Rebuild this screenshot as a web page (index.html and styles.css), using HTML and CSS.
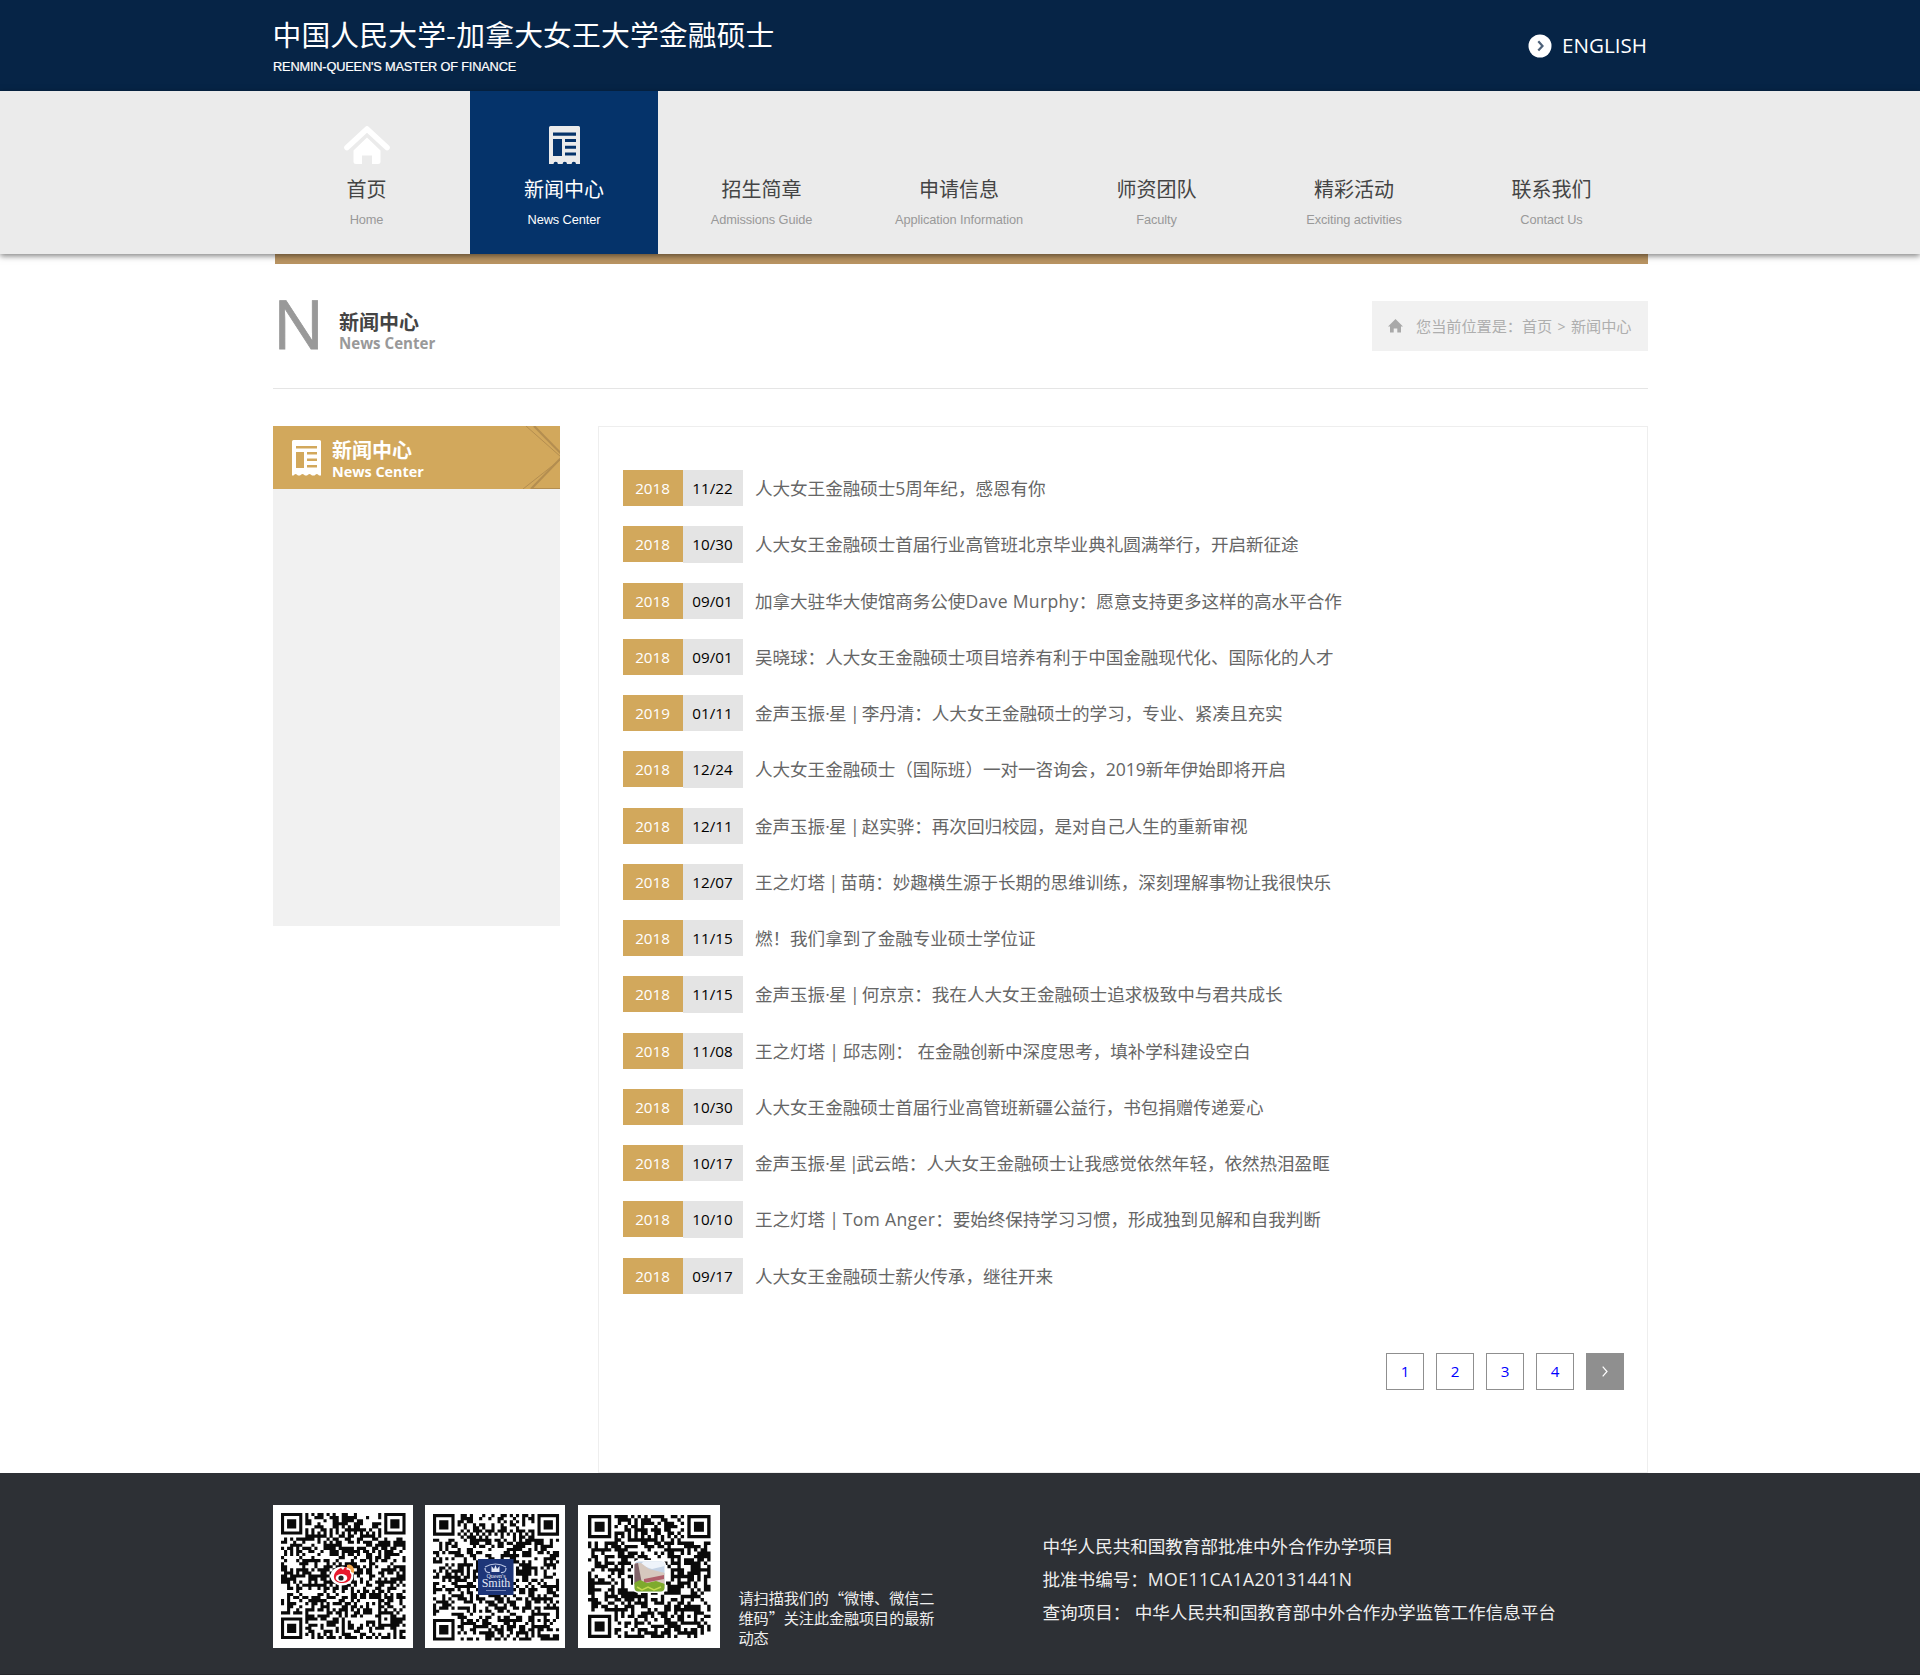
FILE: index.html
```html
<!DOCTYPE html>
<html lang="zh-CN">
<head>
<meta charset="utf-8">
<title>新闻中心</title>
<link rel="stylesheet" href="styles.css">
</head>
<body>
<header class="top">
  <div class="wrap top-inner">
    <div class="brand">
      <h1 class="brand-cn">中国人民大学-加拿大女王大学金融硕士</h1>
      <p class="brand-en">RENMIN-QUEEN'S MASTER OF FINANCE</p>
    </div>
    <a class="lang">
      <svg width="24" height="24" viewBox="0 0 24 24"><circle cx="12" cy="12" r="11.5" fill="#fff"/><path d="M10.3 7.3l4.2 4.6-4.2 4.6" fill="none" stroke="#4c6078" stroke-width="2.2"/></svg>
      <span>ENGLISH</span>
    </a>
  </div>
</header>
<nav class="nav">
  <ul class="nav-list">
    <li class="nav-item">
      <svg class="nav-icon" width="46" height="38" viewBox="0 0 46 38"><path d="M3 21.5L23 3l20 18.500" fill="none" stroke="#fff" stroke-width="5.600" stroke-linecap="round" stroke-linejoin="round"/><path d="M23 11.500L36.500 24.500V35.500q0 2.500-2.500 2.500H28V29.500H18V38H12q-2.500 0-2.500-2.500V24.500z" fill="#fff"/></svg>
      <span class="nav-cn">首页</span><span class="nav-en">Home</span></li>
    <li class="nav-item active">
      <svg class="nav-icon" width="31" height="38" viewBox="0 0 31 38"><path fill="#ebebeb" fill-rule="evenodd" d="M1.500 0H29.500Q31 0 31 1.500V38H27a2.200 2.200 0 0 0-4.400 0h-4.600a2.200 2.200 0 0 0-4.400 0H8.900a2.200 2.200 0 0 0-4.400 0H0V1.500Q0 0 1.500 0zM4 6.500v3.200h23V6.500zM4 13v17h9V13zM16 13v3h11v-3zM16 19.700v3h11v-3zM16 26.500v3h11v-3z"/></svg>
      <span class="nav-cn">新闻中心</span><span class="nav-en">News Center</span></li>
    <li class="nav-item"><span class="nav-cn">招生简章</span><span class="nav-en">Admissions Guide</span></li>
    <li class="nav-item"><span class="nav-cn">申请信息</span><span class="nav-en">Application Information</span></li>
    <li class="nav-item"><span class="nav-cn">师资团队</span><span class="nav-en">Faculty</span></li>
    <li class="nav-item"><span class="nav-cn">精彩活动</span><span class="nav-en">Exciting activities</span></li>
    <li class="nav-item"><span class="nav-cn">联系我们</span><span class="nav-en">Contact Us</span></li>
  </ul>
</nav>
<main class="wrap">
  <div class="gold-bar"></div>
  <div class="page-head">
    <span class="initial">N</span>
    <div class="page-title"><h2>新闻中心</h2><p>News Center</p></div>
    <div class="crumb">
      <svg width="15" height="14" viewBox="0 0 15 14"><path d="M7.500 0L15 7.500H13V13.500H9.300V9.500H5.700V13.500H2V7.500H0z" fill="#a9a9a9"/></svg>
      <span>您当前位置是：首页 <i>&gt;</i> 新闻中心</span>
    </div>
  </div>
  <div class="columns">
    <aside class="side">
      <div class="side-head">
        <svg class="side-icon" width="29" height="36" viewBox="0 0 29 36"><path fill="#fff" fill-rule="evenodd" d="M1.500 0H27.500Q29 0 29 1.500V35.500H27q-2-3-4.500 0H20q-2.500-3-5 0H13q-2.500-3-5 0H6q-2.500-3-4.500 0H0V1.500Q0 0 1.500 0zM4 6v2.500h21V6zM4 12v16h8V12zM15 12v2.500h10V12zM15 18.500V21h10v-2.500zM15 25v2.500h10V25z"/></svg>
        <div class="side-title"><h3>新闻中心</h3><p>News Center</p></div>
        <svg class="side-deco" width="40" height="63" viewBox="0 0 40 63"><g fill="none" stroke="#b48e50"><path d="M14 0L41 27.500" stroke-width="2.200"/><path d="M6 0L41 31" stroke-width="1"/><path d="M41 32L11 63" stroke-width="2.200"/><path d="M41 33L3 63" stroke-width="1"/><path d="M11 62.500H40" stroke-width="1"/></g></svg>
      </div>
    </aside>
    <section class="content">
      <ul class="news">
        <li><b>2018</b><time>11/22</time><a>人大女王金融硕士<em>5</em>周年纪，感恩有你</a></li>
        <li><b>2018</b><time>10/30</time><a>人大女王金融硕士首届行业高管班北京毕业典礼圆满举行，开启新征途</a></li>
        <li><b>2018</b><time>09/01</time><a>加拿大驻华大使馆商务公使<em class="name">Dave Murphy</em>：愿意支持更多这样的高水平合作</a></li>
        <li><b>2018</b><time>09/01</time><a>吴晓球：人大女王金融硕士项目培养有利于中国金融现代化、国际化的人才</a></li>
        <li><b>2019</b><time>01/11</time><a>金声玉振<em class="dot">·</em>星<em class="bar"> | </em>李丹清：人大女王金融硕士的学习，专业、紧凑且充实</a></li>
        <li><b>2018</b><time>12/24</time><a>人大女王金融硕士（国际班）一对一咨询会，<em>2019</em>新年伊始即将开启</a></li>
        <li><b>2018</b><time>12/11</time><a>金声玉振<em class="dot">·</em>星<em class="bar"> | </em>赵实骅：再次回归校园，是对自己人生的重新审视</a></li>
        <li><b>2018</b><time>12/07</time><a>王之灯塔<em class="bar"> | </em>苗萌：妙趣横生源于长期的思维训练，深刻理解事物让我很快乐</a></li>
        <li><b>2018</b><time>11/15</time><a>燃！我们拿到了金融专业硕士学位证</a></li>
        <li><b>2018</b><time>11/15</time><a>金声玉振<em class="dot">·</em>星<em class="bar"> | </em>何京京：我在人大女王金融硕士追求极致中与君共成长</a></li>
        <li><b>2018</b><time>11/08</time><a>王之灯塔<em class="bar wide"> | </em>邱志刚：<em> </em>在金融创新中深度思考，填补学科建设空白</a></li>
        <li><b>2018</b><time>10/30</time><a>人大女王金融硕士首届行业高管班新疆公益行，书包捐赠传递爱心</a></li>
        <li><b>2018</b><time>10/17</time><a>金声玉振<em class="dot">·</em>星<em class="bar tight"> |</em>武云皓：人大女王金融硕士让我感觉依然年轻，依然热泪盈眶</a></li>
        <li><b>2018</b><time>10/10</time><a>王之灯塔<em class="bar wide"> | </em><em class="name">Tom Anger</em>：要始终保持学习习惯，形成独到见解和自我判断</a></li>
        <li><b>2018</b><time>09/17</time><a>人大女王金融硕士薪火传承，继往开来</a></li>
      </ul>
      <div class="pager">
        <a>1</a><a>2</a><a>3</a><a>4</a>
        <a class="next"><svg width="6" height="11" viewBox="0 0 6 11"><path d="M.7.7l4.300 4.800-4.300 4.800" fill="none" stroke="#fff" stroke-width="1.200"/></svg></a>
      </div>
    </section>
  </div>
</main>
<footer class="footer">
  <div class="wrap foot-inner">
    <div class="codes">
      <svg width="140" height="143" viewBox="0 0 140 143">
        <rect width="140" height="143" fill="#fff"/>
        <path class="qr" data-n="41" data-x="8" data-y="8" data-w="124.500" data-h="126" data-seed="17" data-gap="3"/>
        <ellipse cx="69" cy="71" rx="11.500" ry="9.500" fill="#fff"/>
        <path d="M61 73c-1-5 4-9 7-10l2 2 2-3c2 0 2 2 1.500 3 3-1 4 1 3.500 3 2 1 1.500 4 .5 6-2 5-15 6-16.500-1z" fill="#e8192c"/>
        <ellipse cx="68.500" cy="73" rx="5.800" ry="4" fill="#fff"/><circle cx="68" cy="73" r="2.600" fill="#222"/>
        <path d="M74 60c4-2 8 2 7 8l-3-1c0-3-1-4-4-4z" fill="#f5a54a"/>
      </svg>
      <svg width="140" height="143" viewBox="0 0 140 143">
        <rect width="140" height="143" fill="#fff"/>
        <path class="qr" data-n="41" data-x="8" data-y="9" data-w="126" data-h="126.500" data-seed="91" data-gap="6"/>
        <rect x="53" y="54" width="35.500" height="36" fill="#1d3578"/>
        <path d="M60 62q10.500-6 21 0M60 63q0 5 5 4.500M81 63q0 5-5 4.500" fill="none" stroke="#b9c4e2" stroke-width="1.200"/>
        <path d="M66.500 67v-6l2.500 3 1.500-4 1.500 4 2.500-3v6z" fill="#e4e9f6"/>
        <text class="logo-small" x="71" y="73">Queen's</text><text class="logo-big" x="71" y="81.500">Smith</text>
        <path d="M61 85.500h20" stroke="#8c9ac6" stroke-width=".8"/>
      </svg>
      <svg width="142" height="143" viewBox="0 0 142 143">
        <rect width="142" height="143" fill="#fff"/>
        <path class="qr" data-n="37" data-x="10" data-y="10" data-w="122.500" data-h="123" data-seed="53" data-gap="5"/>
        <rect x="55" y="55" width="33" height="33" rx="5" fill="#fff"/>
        <clipPath id="photo"><rect x="56.500" y="56.500" width="30" height="30" rx="4"/></clipPath>
        <g clip-path="url(#photo)"><rect x="56" y="56" width="31" height="31" fill="#c4d3e6"/><path d="M62 60l12 4 13-3v-5H66z" fill="#eef3fa"/><path d="M56 58l7 0 8 6 16 4v13H56z" fill="#d6c8be"/><path d="M56 59l4-1 4 21h-8z" fill="#81646a"/><path d="M66 74l20-4v4l-20 4z" fill="#b0606b"/><path d="M56 78l6-3 7 3 9-2 9 3v9H56z" fill="#7eaa2d"/><path d="M59 82l5 3 6-3 6 3 7-3" fill="none" stroke="#c2d94f" stroke-width="1.500"/></g>
      </svg>
      <p class="scan">请扫描我们的“微博、微信二<br>维码”关注此金融项目的最新<br>动态</p>
    </div>
    <div class="approval">
      <p>中华人民共和国教育部批准中外合作办学项目</p>
      <p>批准书编号：<em class="code">MOE11CA1A20131441N</em></p>
      <p>查询项目：<em> </em>中华人民共和国教育部中外合作办学监管工作信息平台</p>
    </div>
  </div>
</footer>
<script src="qr.js"></script>
</body>
</html>
```
FILE: styles.css
```css
* { box-sizing: border-box; margin: 0; padding: 0; }
body { width: 1920px; background: #fff; font-family: "Noto Sans CJK SC", sans-serif; font-size: 16px; color: #666; overflow-x: hidden; }
ul { list-style: none; }
svg { display: block; flex: none; }
em, i { font-style: normal; }
p, h1, h2, h3, a, span { white-space: nowrap; }
.wrap { width: 1375px; margin-left: 273px; }

.top { height: 91px; background: #062446; color: #fff; }
.top-inner { display: flex; justify-content: space-between; }
.brand { padding-top: 14px; }
.brand-cn { margin-left: -.5px; font-size: 28.8px; line-height: 40px; font-weight: 400; letter-spacing: .14px; }
.brand-en { margin-top: 1px; font: 12.8px/24px "Liberation Sans", sans-serif; letter-spacing: -.19px; -webkit-text-stroke: .2px #fff; }
.lang { display: flex; align-items: center; gap: 10px; height: 91px; padding-right: 1px; font: 20.6px/30px "Open Sans", sans-serif; }
.lang span { margin-top: -2px; }

.nav { position: relative; z-index: 1; height: 163px; background: #ebebeb; box-shadow: 0 2px 6px rgba(0, 0, 0, .5); }
.nav-list { display: flex; justify-content: space-between; width: 1373px; margin-left: 272.5px; height: 163px; }
.nav-item { width: 188px; display: flex; flex-direction: column; align-items: center; justify-content: flex-end; padding-bottom: 22px; color: #444; }
.nav-icon { margin-bottom: 10px; }
.nav-cn { font-size: 20px; line-height: 30px; }
.nav-en { margin-top: 4px; font: 12.8px/24px "Liberation Sans", sans-serif; letter-spacing: -.1px; color: #999; }
.active { background: #05336a; color: #fff; }
.active .nav-en { color: #fff; }

.gold-bar { height: 10px; margin-left: 2px; background: #b99462; }
.page-head { display: flex; height: 125px; border-bottom: 1px solid #e5e5e5; }
.initial { width: 66px; font: 68px/80px "Open Sans", sans-serif; color: #999; padding-top: 19px; -webkit-text-stroke: .8px #999; }
.page-title { padding-top: 44px; }
.page-title h2 { font-size: 20px; line-height: 27px; color: #444; }
.page-title p { font: bold 15.1px/16px "Open Sans", sans-serif; color: #999; }
.crumb { display: flex; align-items: center; gap: 13px; margin: 37px 0 0 auto; width: 276px; height: 50px; padding: 0 0 2px 16px; background: #f1f1f1; color: #aeaeae; font-size: 15.2px; }
.crumb svg { margin-top: 2px; }
.crumb span { letter-spacing: -.05px; }
.crumb i { margin: 0 2px; font-family: "Open Sans", sans-serif; font-size: 14px; }

.columns { display: flex; justify-content: space-between; margin-top: 37px; }
.side { width: 287px; height: 500px; background: #f1f1f1; }
.side-head { display: flex; height: 63px; background: #d2a85c; color: #fff; padding: 14px 0 0 19px; }
.side-title { margin: -4px auto 0 11px; }
.side-title h3 { font-size: 20px; line-height: 27px; }
.side-title p { font: bold 14.4px/17px "Open Sans", sans-serif; }
.side-deco { margin-top: -14px; }
.content { width: 1050px; height: 1047px; border: 1px solid #eee; padding: 43px 23px 0 24px; }
.news li { display: flex; height: 36.25px; margin-bottom: 20px; line-height: 35px; }
.news b, .news time { width: 60px; text-align: center; font: 15.2px/36px "Open Sans", sans-serif; padding-right: 1px; }
.news b { height: 36px; background: #d2a85c; color: #fff; }
.news time { background: #e4e4e4; color: #000; }
.news a { margin-left: 12px; font-size: 17.6px; letter-spacing: -.06px; }
.news em, .approval em { font-family: "Open Sans", sans-serif; font-size: 17.6px; line-height: 1; white-space: pre; }
.news .dot { letter-spacing: -.7px; }
.news .name { letter-spacing: .3px; }
.news .bar { letter-spacing: -1.25px; }
.news .wide { letter-spacing: -.4px; }
.news .tight { letter-spacing: -2.3px; }
.pager { display: flex; justify-content: flex-end; gap: 12px; margin-top: 59px; }
.pager a { width: 38px; height: 37px; border: 1px solid #8f8f8f; color: #00f; text-align: center; font: 15.2px/35px "Open Sans", sans-serif; }
.pager .next { display: flex; align-items: center; justify-content: center; background: #8f8f8f; }

.footer { height: 202px; background: #2d3035; border-bottom: 1px solid #24262a; color: #eee; }
.foot-inner { display: flex; padding-top: 32px; }
.codes { display: flex; width: 769.5px; gap: 12px; }
.codes svg:nth-child(3) { margin-left: 1px; }
.codes .qr { fill: #0a0a0a; }
.logo-small, .logo-big { font-family: "Liberation Serif", serif; text-anchor: middle; fill: #e4e9f6; }
.logo-small { font-size: 6px; }
.logo-big { font-size: 12px; }
.scan { margin: 82px 0 0 6.5px; font-size: 15.2px; line-height: 20px; letter-spacing: -.12px; }
.approval { padding-top: 23.5px; font-size: 17.6px; line-height: 33px; letter-spacing: -.05px; }
.approval .code { letter-spacing: .45px; }
```
FILE: qr.js
```js
// Fills each .qr path with finder squares, timing lines and data modules.
document.querySelectorAll('.qr').forEach(function (path) {
  var d = path.dataset, n = +d.n, x0 = +d.x, y0 = +d.y;
  var w = d.w / n, h = d.h / n, seed = +d.seed, mid = (n - 1) / 2, out = '';
  function random() {
    seed = (seed * 1103515245 + 12345) % 2147483648;
    return seed / 2147483648;
  }
  function square(r, c, size) {
    var k = Math.max(Math.abs(r), Math.abs(c));
    return k === size || k < size - 1;
  }
  for (var r = 0; r < n; r++) {
    for (var c = 0; c < n; c++) {
      var on = random() < 0.52;
      var top = r < 8, left = c < 8, right = c > n - 9, bottom = r > n - 9;
      if ((top && (left || right)) || (bottom && left)) {
        var fr = r - (bottom ? n - 4 : 3), fc = c - (right ? n - 4 : 3);
        on = Math.max(Math.abs(fr), Math.abs(fc)) < 4 && square(fr, fc, 3);
      } else if (Math.abs(r - n + 7) < 3 && Math.abs(c - n + 7) < 3) {
        var k = Math.max(Math.abs(r - n + 7), Math.abs(c - n + 7));
        on = k !== 1;
      } else if (r === 6 || c === 6) {
        on = (r + c) % 2 === 0;
      }
      if (Math.abs(r - mid) < d.gap && Math.abs(c - mid) < d.gap) on = false;
      if (on) out += 'M' + (x0 + c * w) + ' ' + (y0 + r * h) + 'h' + (w + 0.05) + 'v' + (h + 0.05) + 'h' + (-w - 0.05) + 'z';
    }
  }
  path.setAttribute('d', out);
});
```
